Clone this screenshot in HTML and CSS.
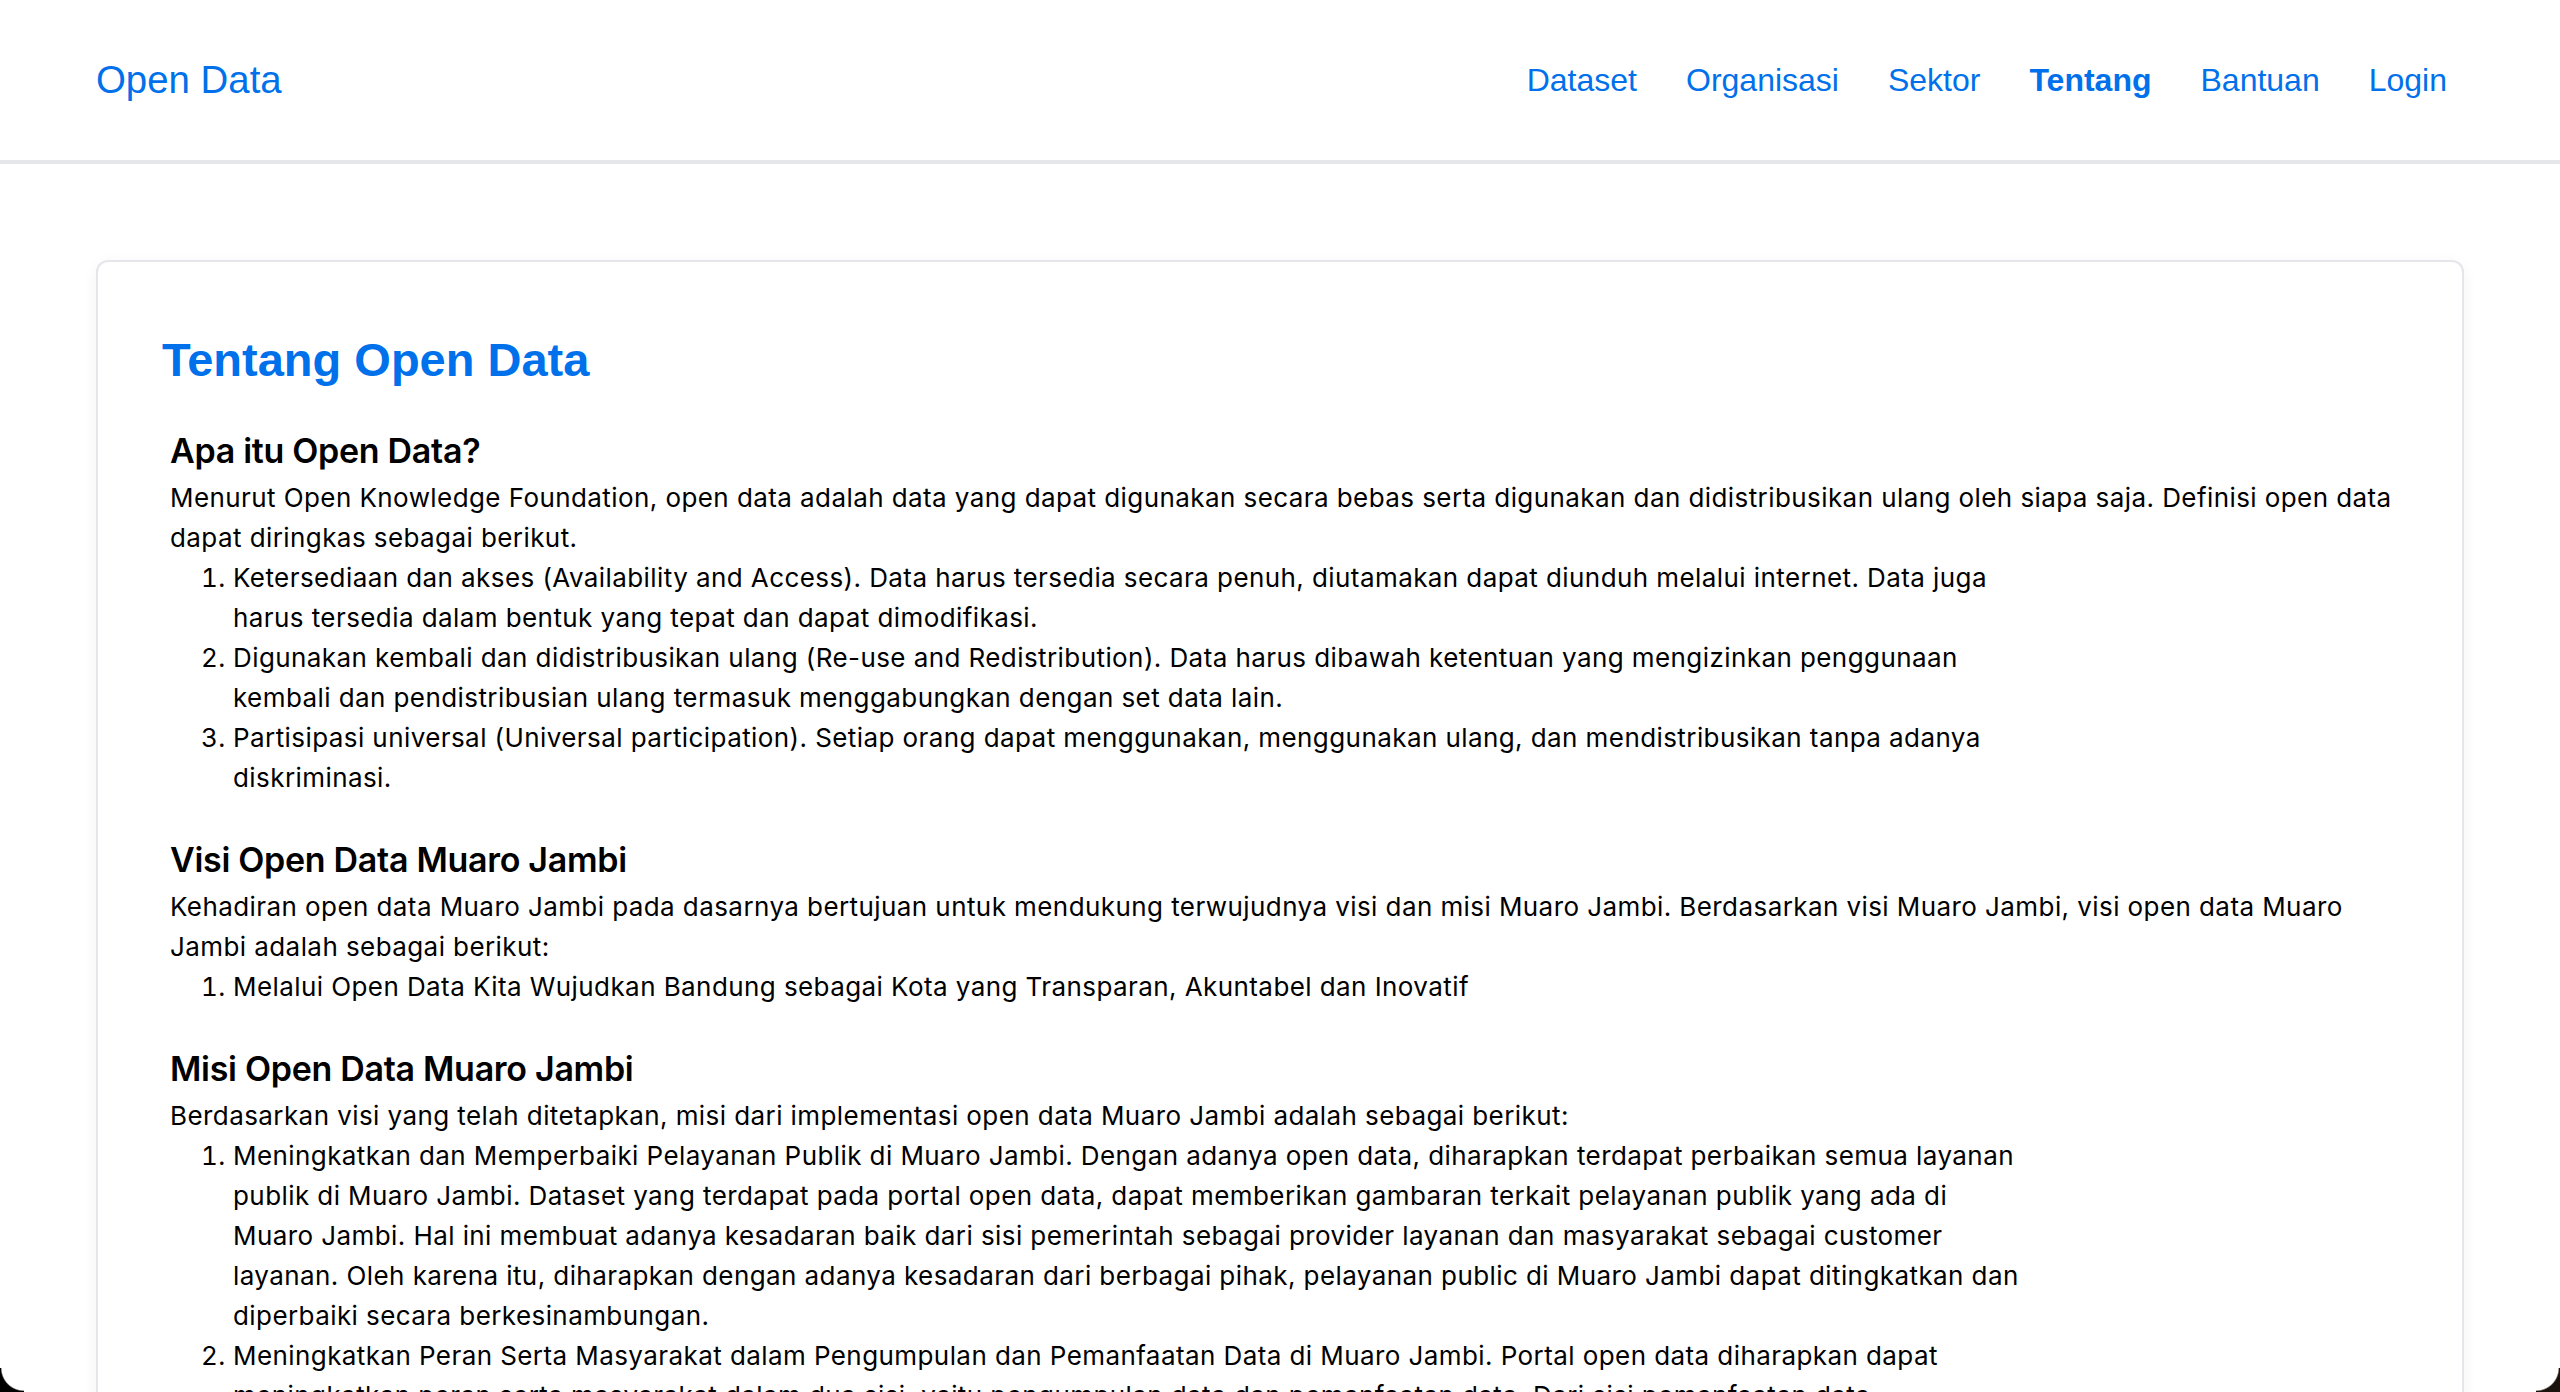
FILE: index.html
```html
<!DOCTYPE html>
<html lang="id">
<head>
<meta charset="utf-8">
<title>Tentang - Open Data</title>
<link rel="stylesheet" href="styles.css">
</head>
<body>
<header class="site-header">
  <a class="brand" href="#">Open Data</a>
  <nav class="main-nav">
    <a class="nav-link" href="#">Dataset</a>
    <a class="nav-link" href="#">Organisasi</a>
    <a class="nav-link" href="#">Sektor</a>
    <a class="nav-link active" href="#">Tentang</a>
    <a class="nav-link" href="#">Bantuan</a>
    <a class="nav-link" href="#">Login</a>
  </nav>
</header>
<main class="page">
  <article class="card">
    <h1 class="page-title">Tentang Open Data</h1>
    <section class="block">
      <h2 class="block-title">Apa itu Open Data?</h2>
      <p class="block-text">Menurut Open Knowledge Foundation, open data adalah data yang dapat digunakan secara bebas serta digunakan dan didistribusikan ulang oleh siapa saja. Definisi open data dapat diringkas sebagai berikut.</p>
      <ol class="block-list">
        <li>Ketersediaan dan akses (Availability and Access). Data harus tersedia secara penuh, diutamakan dapat diunduh melalui internet. Data juga harus tersedia dalam bentuk yang tepat dan dapat dimodifikasi.</li>
        <li>Digunakan kembali dan didistribusikan ulang (Re-use and Redistribution). Data harus dibawah ketentuan yang mengizinkan penggunaan kembali dan pendistribusian ulang termasuk menggabungkan dengan set data lain.</li>
        <li>Partisipasi universal (Universal participation). Setiap orang dapat menggunakan, menggunakan ulang, dan mendistribusikan tanpa adanya diskriminasi.</li>
      </ol>
    </section>
    <section class="block">
      <h2 class="block-title">Visi Open Data Muaro Jambi</h2>
      <p class="block-text">Kehadiran open data Muaro Jambi pada dasarnya bertujuan untuk mendukung terwujudnya visi dan misi Muaro Jambi. Berdasarkan visi Muaro Jambi, visi open data Muaro Jambi adalah sebagai berikut:</p>
      <ol class="block-list">
        <li>Melalui Open Data Kita Wujudkan Bandung sebagai Kota yang Transparan, Akuntabel dan Inovatif</li>
      </ol>
    </section>
    <section class="block">
      <h2 class="block-title">Misi Open Data Muaro Jambi</h2>
      <p class="block-text">Berdasarkan visi yang telah ditetapkan, misi dari implementasi open data Muaro Jambi adalah sebagai berikut:</p>
      <ol class="block-list">
        <li>Meningkatkan dan Memperbaiki Pelayanan Publik di Muaro Jambi. Dengan adanya open data, diharapkan terdapat perbaikan semua layanan publik di Muaro Jambi. Dataset yang terdapat pada portal open data, dapat memberikan gambaran terkait pelayanan publik yang ada di Muaro Jambi. Hal ini membuat adanya kesadaran baik dari sisi pemerintah sebagai provider layanan dan masyarakat sebagai customer layanan. Oleh karena itu, diharapkan dengan adanya kesadaran dari berbagai pihak, pelayanan public di Muaro Jambi dapat ditingkatkan dan diperbaiki secara berkesinambungan.</li>
        <li>Meningkatkan Peran Serta Masyarakat dalam Pengumpulan dan Pemanfaatan Data di Muaro Jambi. Portal open data diharapkan dapat meningkatkan peran serta masyarakat dalam dua sisi, yaitu pengumpulan data dan pemanfaatan data. Dari sisi pemanfaatan data, masyarakat dapat menggunakan data yang tersedia untuk berbagai kebutuhan.</li>
      </ol>
    </section>
  </article>
</main>
<div class="corner corner-left"></div>
<div class="corner corner-right"></div>
</body>
</html>
```
FILE: styles.css
```css
* { box-sizing: border-box; }

html, body {
  margin: 0;
  padding: 0;
  background: #ffffff;
}

body {
  font-family: Inter, "Liberation Sans", Arial, sans-serif;
  color: #000000;
}

a { text-decoration: none; }

.site-header {
  height: 164px;
  display: flex;
  align-items: center;
  justify-content: space-between;
  padding: 0 113px 0 96px;
  border-bottom: 4px solid #e6e7eb;
  background: #ffffff;
  font-family: "Liberation Sans", Arial, sans-serif;
}

.brand {
  font-size: 38.4px;
  color: #0071ea;
  line-height: 1;
}

.main-nav {
  display: flex;
  gap: 49px;
  align-items: center;
}

.nav-link {
  font-size: 32px;
  color: #0071ea;
  line-height: 1;
}

.nav-link.active {
  font-weight: 700;
}

.page {
  padding: 96px;
}

.card {
  border: 2px solid #e5e6ea;
  border-radius: 12px;
  padding: 62px 58px 64px 64px;
  box-shadow: 0 4px 16px rgba(0, 0, 0, 0.05);
  background: #ffffff;
}

.page-title {
  margin: 0 0 34px 0;
  font-family: "Liberation Sans", Arial, sans-serif;
  font-size: 47px;
  line-height: 72px;
  font-weight: 700;
  color: #0071ea;
}

.block {
  padding: 0 0 0 8px;
  margin-bottom: 41px;
}

.block-title {
  margin: 0 0 6px 0;
  font-size: 34px;
  line-height: 42px;
  font-weight: 600;
  letter-spacing: -0.3px;
  color: #000000;
}

.block-text {
  margin: 0;
  font-size: 26px;
  line-height: 40px;
  letter-spacing: 0.42px;
}

.block-list {
  margin: 0;
  padding-left: 63px;
  font-size: 26px;
  line-height: 40px;
  letter-spacing: 0.42px;
}

.block-list li {
  max-width: 1792px;
}

.corner {
  position: fixed;
  bottom: 0;
  width: 24px;
  height: 24px;
  pointer-events: none;
}

.corner-left {
  left: 0;
  background: radial-gradient(circle at 24px 0, transparent 22px, #000000 23.5px);
}

.corner-right {
  right: 0;
  background: radial-gradient(circle at 0 0, transparent 22px, #1a120c 23.5px);
}
```
